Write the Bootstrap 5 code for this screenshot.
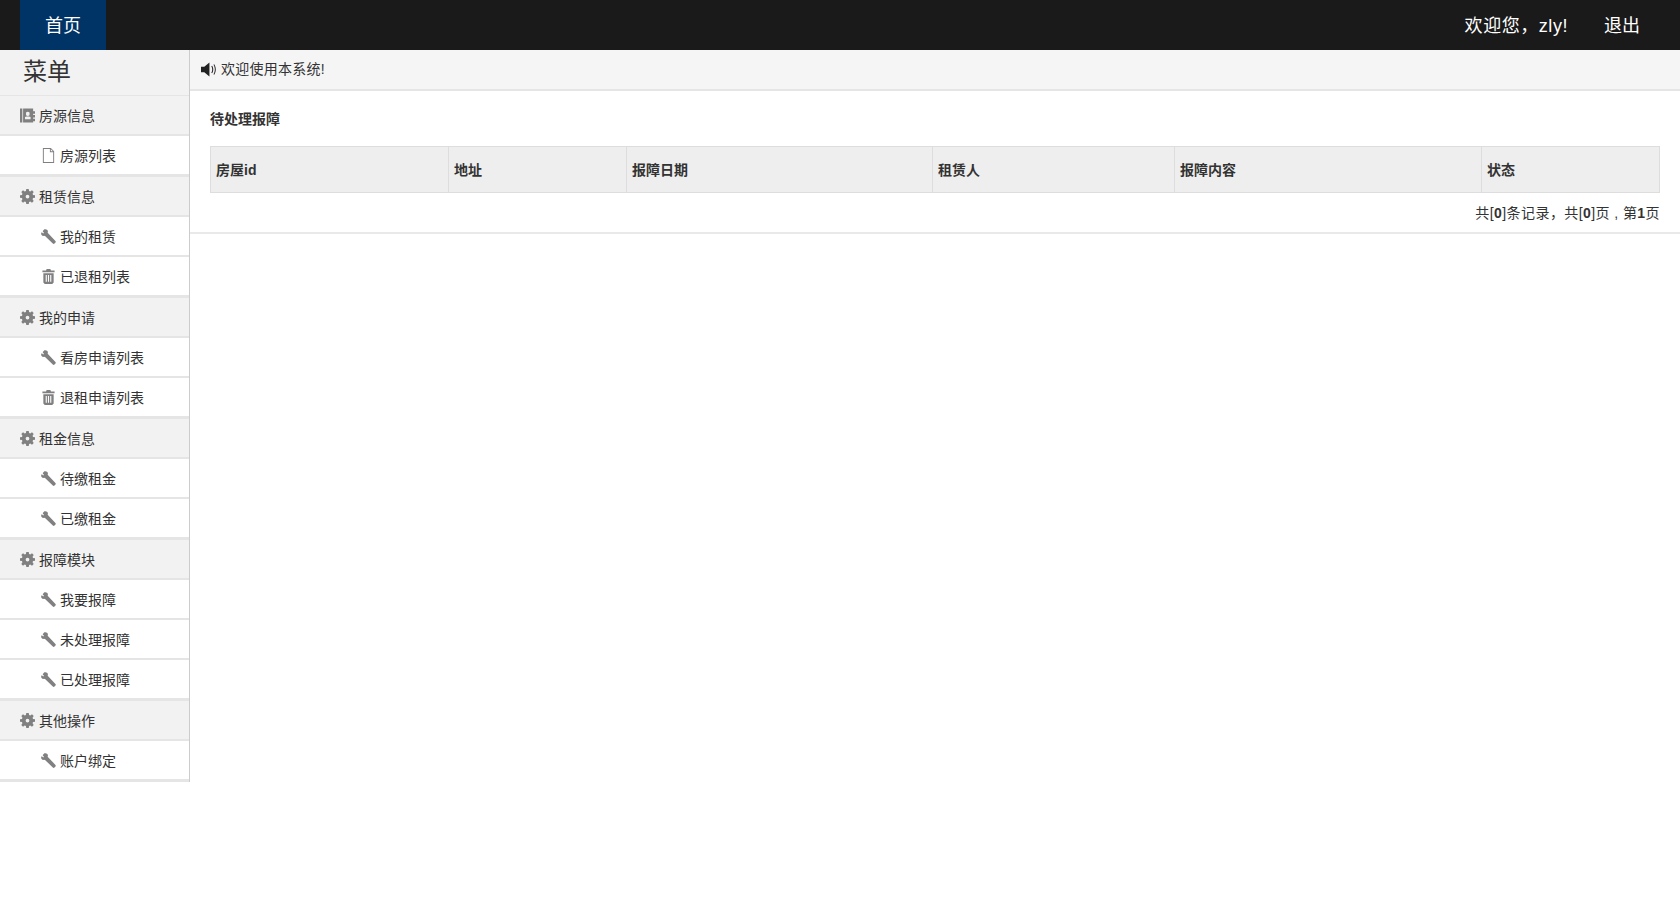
<!DOCTYPE html>
<html lang="zh-CN">
<head>
  <meta charset="UTF-8" />
  <title>首页</title>
  <link href="https://cdn.jsdelivr.net/npm/bootstrap@5.3.3/dist/css/bootstrap.min.css" rel="stylesheet" />
  <style>
    body {
      font-family: "Liberation Sans", "Noto Sans CJK SC", sans-serif;
      font-size: 14px;
      color: #333;
      background: #fff;
    }
    .top-bar { height: 50px; background: #1a1a1a; padding: 0 20px; }
    .top-bar a { color: #fff; font-size: 18px; text-decoration: none; line-height: 53px; height: 50px; display: block; }
    .home-tab { width: 86px; background: #003366; text-align: center; }
    .top-right { gap: 36px; padding-right: 20px; }
    .top-right a:first-child { letter-spacing: .55px; }
    .side-menu { width: 190px; flex: none; border-right: 1px solid #ccc; align-self: flex-start; }
    .side-title { height: 45px; background: #f2f2f2; font-size: 24px; line-height: 44px; padding-left: 23px; }
    .menu-group { border-bottom: 1px solid #e5e5e5; }
    .menu-head, .menu-item { height: 40px; border-bottom: 2px solid #e5e5e5; display: flex; align-items: center; color: #333; padding-top: 1px; }
    .menu-head { background: #f2f2f2; padding-left: 20px; gap: 4px; border-top: 1px solid #e5e5e5; height: 41px; }
    .menu-group + .menu-group .menu-head { border-top: 0; height: 40px; }
    .menu-item { padding-left: 41px; gap: 4px; background: #fff; }
    .menu-label { position: relative; top: 1px; }
    .ico { width: 15px; height: 15px; fill: #808080; flex: none; }
    .notice-bar { height: 41px; background: #f5f5f5; border-bottom: 2px solid #e5e5e5; padding-left: 11px; gap: 5px; font-size: 14px; letter-spacing: .25px; }
    .notice-bar .ico { fill: #222; }
    .panel-body { padding: 0 20px 0 20px; height: 143px; border-bottom: 2px solid #e9e9e9; }
    .panel-title { font-weight: 700; padding-top: 18px; height: 55px; line-height: 20px; }
    .rent-table { margin: 0; table-layout: fixed; width: 100%; border-color: #ddd; border-width: 2px; }
    .rent-table th { background: #eee; height: 46px; padding: 2px 5px 0; vertical-align: middle; border: 1px solid #ddd; color: #333; font-size: 14px; --bs-table-bg: #eee; }
    .rent-table tr { border-color: #ddd; }
    .c1 { width: 238px; }
    .c2 { width: 178px; }
    .c3 { width: 306px; }
    .c4 { width: 242px; }
    .c5 { width: 307px; }
    .pager-line { text-align: right; line-height: 20px; padding-top: 10px; letter-spacing: .42px; }
  </style>
</head>
<body>
  <svg width="0" height="0" class="position-absolute">
    <symbol id="i-gear" viewBox="0 0 16 16"><path d="M6.700 0h2.600l.4 2.100 1.300.5 1.800-1.200 1.800 1.800-1.200 1.800.5 1.300 2.100.4v2.600l-2.100.4-.5 1.300 1.200 1.800-1.800 1.800-1.800-1.200-1.300.5-.4 2.100H6.700l-.4-2.100-1.300-.5-1.800 1.200-1.800-1.800 1.200-1.800-.5-1.300L0 9.300V6.700l2.100-.4.5-1.300L1.400 3.200l1.800-1.800 1.800 1.200 1.300-.5zM8 6a2 2 0 1 0 0 4 2 2 0 0 0 0-4z" fill-rule="evenodd"/></symbol>
    <symbol id="i-wrench" viewBox="0 0 16 16"><path d="M3.600.3 1.900 2l.2.900 1.100 1.100-.9.900L1.200 3.800.3 3.600C-.2 5.500.6 7 2.200 7.300c.7.100 1.300 0 1.800-.2l8.600 8.400c.5.500 1.300.5 1.800 0l1-1c.5-.5.500-1.300 0-1.800L7.100 4c.2-.5.300-1.100.2-1.800C7 .6 5.500-.2 3.600.3z"/></symbol>
    <symbol id="i-trash" viewBox="0 0 16 16"><path d="M6 0h4l.6 1.500H14.500v2h-13v-2h3.900zM2.500 4.500h11V14.500l-1.500 1.500H4l-1.500-1.500zM5 6.500v7h1.200v-7zm2.400 0v7h1.200v-7zm2.400 0v7H11v-7z" fill-rule="evenodd"/></symbol>
    <symbol id="i-file" viewBox="0 0 16 16"><path d="M2 0h8.500L14 3.500V16H2zm1 1v14h10V4.500H9.500V1zm7.500.3v2.200h2.200z" fill-rule="evenodd"/></symbol>
    <symbol id="i-book" viewBox="0 0 16 16"><path d="M0 .5h14v3h2v2.500h-2v1.500h2v2.500h-2v1.500h2v2.500h-2v1.500H0zm2.500 0v15h.8V.5zm5.800 3.500a2 2 0 0 0-2 2.300 2 2 0 0 0 2 2.200 2 2 0 0 0 2-2.200 2 2 0 0 0-2-2.300zm-3 5.700v2.300h6v-2.300l-1.800-.7H7.100z" fill-rule="evenodd"/></symbol>
    <symbol id="i-sound" viewBox="0 0 16 16"><path d="M0 5h3.500L9 .5v15L3.500 11H0z"/><path d="M11 4.500c1.300 1.700 1.300 5.300 0 7l.8.500c1.700-2 1.700-6 0-8zM13.300 3c1.900 2.600 1.900 7.400 0 10l.8.500c2.200-3 2.200-8 0-11z"/></symbol>
  </svg>

  <nav class="top-bar d-flex justify-content-between">
    <a class="home-tab" href="#">首页</a>
    <div class="top-right d-flex">
      <a href="#">欢迎您，zly!</a>
      <a href="#">退出</a>
    </div>
  </nav>

  <div class="d-flex">
    <aside class="side-menu">
      <div class="side-title">菜单</div>
      <div class="menu-group">
        <div class="menu-head"><svg class="ico"><use href="#i-book"/></svg><span class="menu-label">房源信息</span></div>
        <div class="menu-item"><svg class="ico"><use href="#i-file"/></svg><span class="menu-label">房源列表</span></div>
      </div>
      <div class="menu-group">
        <div class="menu-head"><svg class="ico"><use href="#i-gear"/></svg><span class="menu-label">租赁信息</span></div>
        <div class="menu-item"><svg class="ico"><use href="#i-wrench"/></svg><span class="menu-label">我的租赁</span></div>
        <div class="menu-item"><svg class="ico"><use href="#i-trash"/></svg><span class="menu-label">已退租列表</span></div>
      </div>
      <div class="menu-group">
        <div class="menu-head"><svg class="ico"><use href="#i-gear"/></svg><span class="menu-label">我的申请</span></div>
        <div class="menu-item"><svg class="ico"><use href="#i-wrench"/></svg><span class="menu-label">看房申请列表</span></div>
        <div class="menu-item"><svg class="ico"><use href="#i-trash"/></svg><span class="menu-label">退租申请列表</span></div>
      </div>
      <div class="menu-group">
        <div class="menu-head"><svg class="ico"><use href="#i-gear"/></svg><span class="menu-label">租金信息</span></div>
        <div class="menu-item"><svg class="ico"><use href="#i-wrench"/></svg><span class="menu-label">待缴租金</span></div>
        <div class="menu-item"><svg class="ico"><use href="#i-wrench"/></svg><span class="menu-label">已缴租金</span></div>
      </div>
      <div class="menu-group">
        <div class="menu-head"><svg class="ico"><use href="#i-gear"/></svg><span class="menu-label">报障模块</span></div>
        <div class="menu-item"><svg class="ico"><use href="#i-wrench"/></svg><span class="menu-label">我要报障</span></div>
        <div class="menu-item"><svg class="ico"><use href="#i-wrench"/></svg><span class="menu-label">未处理报障</span></div>
        <div class="menu-item"><svg class="ico"><use href="#i-wrench"/></svg><span class="menu-label">已处理报障</span></div>
      </div>
      <div class="menu-group">
        <div class="menu-head"><svg class="ico"><use href="#i-gear"/></svg><span class="menu-label">其他操作</span></div>
        <div class="menu-item"><svg class="ico"><use href="#i-wrench"/></svg><span class="menu-label">账户绑定</span></div>
      </div>
    </aside>

    <main class="flex-grow-1">
      <div class="notice-bar d-flex align-items-center"><svg class="ico"><use href="#i-sound"/></svg>欢迎使用本系统!</div>
      <div class="panel-body">
        <div class="panel-title">待处理报障</div>
        <table class="table table-bordered rent-table">
          <thead>
            <tr>
              <th class="c1">房屋id</th>
              <th class="c2">地址</th>
              <th class="c3">报障日期</th>
              <th class="c4">租赁人</th>
              <th class="c5">报障内容</th>
              <th>状态</th>
            </tr>
          </thead>
        </table>
        <div class="pager-line">共[<b>0</b>]条记录，共[<b>0</b>]页 , 第<b>1</b>页</div>
      </div>
    </main>
  </div>

  <script src="https://cdn.jsdelivr.net/npm/bootstrap@5.3.3/dist/js/bootstrap.bundle.min.js"></script>
</body>
</html>
